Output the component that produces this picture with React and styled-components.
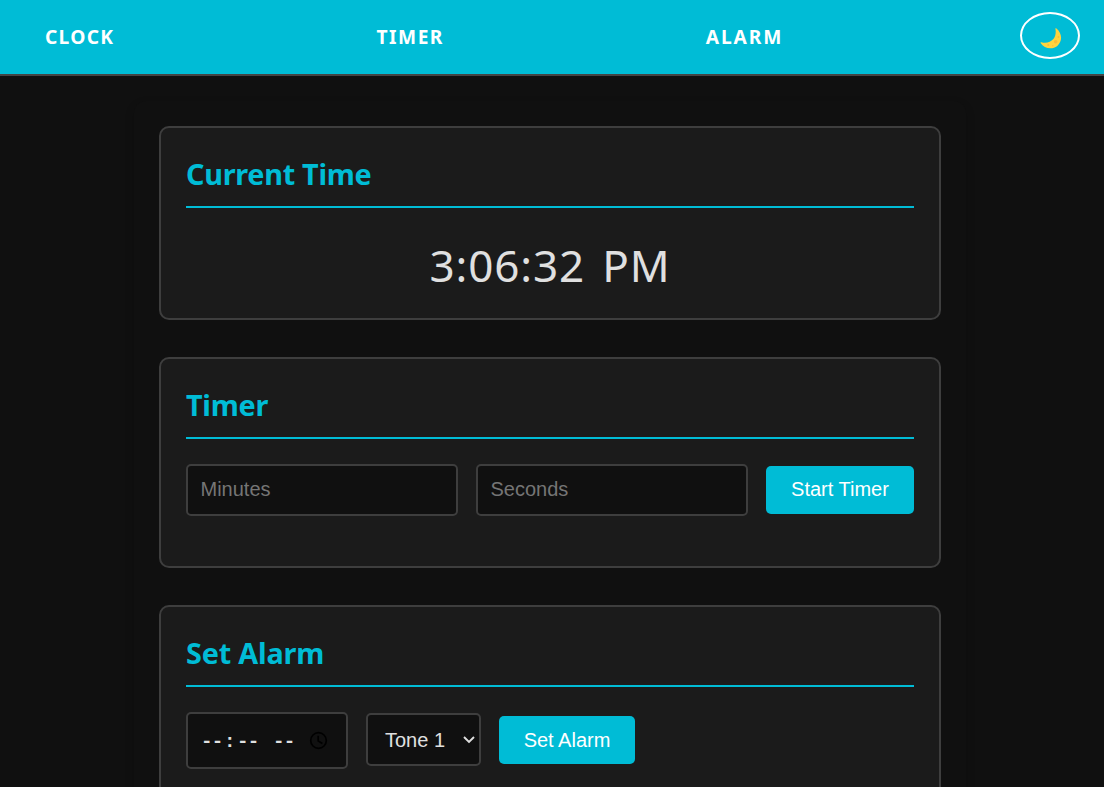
import React from "react";
import styled, { createGlobalStyle } from "styled-components";

const GlobalStyle = createGlobalStyle`
  * { box-sizing: border-box; }
  html, body { margin: 0; padding: 0; }
  body {
    background: #101010;
    color: #e0e0e0;
    font-family: "Open Sans", "Noto Sans", sans-serif;
  }
`;

const Page = styled.div`
  height: 787px;
  overflow: hidden;
`;

const Header = styled.header`
  display: flex;
  align-items: flex-start;
  height: 76px;
  padding: 12px 24px 0 45px;
  background: #00bcd6;
  border-bottom: 2px solid #444;
`;

const NavLink = styled.a`
  flex: none;
  margin-top: 11px;
  width: ${(p) => p.$width}px;
  white-space: nowrap;
  color: #fff;
  font: 700 19.2px/28px "Noto Sans", sans-serif;
  letter-spacing: ${(p) => p.$spacing}px;
`;

const ThemeToggle = styled.button`
  display: flex;
  justify-content: center;
  width: 60px;
  height: 47px;
  margin-left: auto;
  padding: 14px 0 0 1px;
  background: transparent;
  border: 2px solid #fff;
  border-radius: 50%;
`;

const Container = styled.main`
  width: 832px;
  margin: 25px 0 0 134px;
  padding: 25px;
  border-radius: 12px;
  background: #101010;
  box-shadow: 0 4px 10px rgba(0, 0, 0, 0.2);
`;

const Card = styled.section`
  height: ${(p) => p.$height}px;
  margin-bottom: 37px;
  padding: 25px;
  background: #1b1b1b;
  border: 2px solid #3e3e3e;
  border-radius: 10px;
`;

const CardTitle = styled.h2`
  height: 55px;
  margin: 0;
  padding-top: 1px;
  border-bottom: 2px solid #00bcd6;
  color: #00bcd6;
  font: 700 28.8px/40px "Noto Sans", sans-serif;
  letter-spacing: ${(p) => p.$spacing}px;
`;

const Time = styled.div`
  margin-top: 25px;
  color: #e0e0e0;
  text-align: center;
  font: 400 44px/64px "Noto Sans", sans-serif;
  letter-spacing: 0.9px;
  word-spacing: 4.8px;
`;

const Row = styled.div`
  display: flex;
  align-items: center;
  gap: 18px;
  margin-top: 25px;
`;

const NumberField = styled.input`
  width: 272px;
  height: 52px;
  padding: 0 12.5px 2px;
  background: #101010;
  border: 2px solid #3e3e3e;
  border-radius: 5px;
  color: #e0e0e0;
  font: 20px "Liberation Sans", sans-serif;
  outline: none;
  &::placeholder { color: #757575; opacity: 1; }
`;

const Button = styled.button`
  width: ${(p) => p.$width}px;
  height: 48px;
  margin-bottom: ${(p) => (p.$raised ? 1 : 0)}px;
  padding: 0 0 ${(p) => (p.$raised ? 0 : 2)}px;
  background: #00bcd6;
  border: 0;
  border-radius: 5px;
  color: #fff;
  font: 20px "Liberation Sans", sans-serif;
`;

const TimeField = styled.div`
  display: flex;
  align-items: center;
  width: 162px;
  height: 57px;
  padding: 0 18px 0 13px;
  background: #101010;
  border: 2px solid #3e3e3e;
  border-radius: 5px;
`;

const TimePart = styled.span`
  width: ${(p) => p.$width}px;
  padding-top: 2px;
  color: #e0e0e0;
  font: 700 19.2px/24px "Liberation Mono", monospace;
  letter-spacing: -0.8px;
`;

const ClockIcon = styled.svg`
  margin-left: auto;
`;

const SelectBox = styled.div`
  display: flex;
  align-items: center;
  justify-content: space-between;
  width: 115px;
  height: 53px;
  margin-bottom: 2px;
  padding: 1px 4px 0 17px;
  background: #101010;
  border: 2px solid #3e3e3e;
  border-radius: 5px;
  color: #e0e0e0;
  font: 20px "Liberation Sans", sans-serif;
`;

export default function App() {
  return (
    <Page>
      <GlobalStyle />
      <Header>
        <NavLink $width={331.5} $spacing={1.3}>CLOCK</NavLink>
        <NavLink $width={329.3} $spacing={1.5}>TIMER</NavLink>
        <NavLink $width={80} $spacing={1.9}>ALARM</NavLink>
        <ThemeToggle aria-label="Toggle theme">
          <svg width="22" height="21" viewBox="0 0 23 22">
            <path d="M16.9 .3C23.3 5.3 23.8 14 18.1 18.8C12.6 23.3 4.2 21.5 .6 15.7C.3 15 .8 14.6 1.4 14.9C6 16.4 11.1 15.1 14 11.6C16.3 8.6 16.9 4.6 16.1 .7C16 .2 16.5 0 16.9 .3Z" fill="#ffd43e" />
            <circle cx="16.4" cy="14.4" r="1.9" fill="#f9bd35" />
            <circle cx="8.6" cy="17.8" r="1.1" fill="#f9bd35" />
            <circle cx="19.3" cy="9.4" r="1" fill="#f9bd35" />
            <circle cx="13.4" cy="18.5" r=".8" fill="#f9bd35" />
          </svg>
        </ThemeToggle>
      </Header>
      <Container>
        <Card $height={194}>
          <CardTitle $spacing={-0.27}>Current Time</CardTitle>
          <Time>3:06:32 PM</Time>
        </Card>
        <Card $height={211}>
          <CardTitle $spacing={-0.25}>Timer</CardTitle>
          <Row>
            <NumberField placeholder="Minutes" />
            <NumberField placeholder="Seconds" />
            <Button $width={148}>Start Timer</Button>
          </Row>
        </Card>
        <Card $height={260}>
          <CardTitle $spacing={-0.18}>Set Alarm</CardTitle>
          <Row>
            <TimeField>
              <TimePart $width={23}>--</TimePart>
              <TimePart $width={13}>:</TimePart>
              <TimePart $width={36}>--</TimePart>
              <TimePart $width={22}>--</TimePart>
              <ClockIcon width="19" height="19" viewBox="0 0 19 19" fill="none" stroke="#000" strokeWidth="1.7">
                <circle cx="9.5" cy="9.5" r="7.8" />
                <path d="M9.2 4.8V9.9L13.4 12.4" />
              </ClockIcon>
            </TimeField>
            <SelectBox>
              Tone 1
              <svg width="12" height="8" viewBox="0 0 12 8" fill="none" stroke="#e0e0e0" strokeWidth="1.9">
                <path d="M1 1L6 6L11 1" />
              </svg>
            </SelectBox>
            <Button $width={136} $raised>Set Alarm</Button>
          </Row>
        </Card>
      </Container>
    </Page>
  );
}
